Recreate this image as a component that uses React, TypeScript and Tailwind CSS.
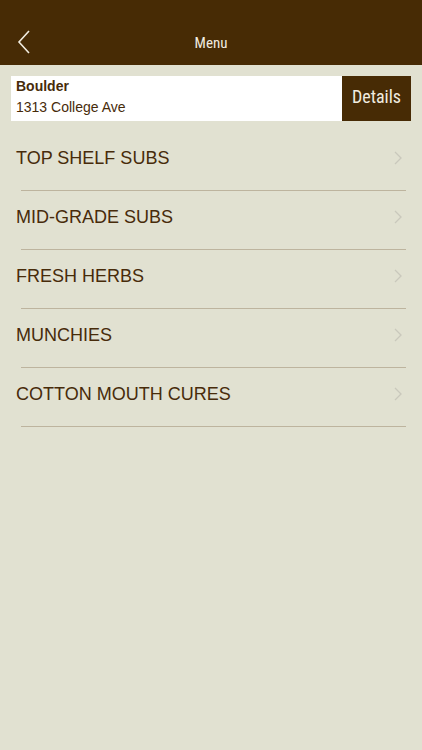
export default function App() {
  const items = [
    "TOP SHELF SUBS",
    "MID-GRADE SUBS",
    "FRESH HERBS",
    "MUNCHIES",
    "COTTON MOUTH CURES",
  ];

  return (
    <div
      className="w-[422px] h-[750px] bg-[#e1e1d1] flex flex-col"
      style={{ fontFamily: '"Liberation Sans", Arial, sans-serif' }}
    >
      {/* Header */}
      <div className="h-[65px] bg-[#472b05] flex items-end pb-[13px] relative shrink-0">
        <svg
          className="absolute left-[17px] top-[30px] w-[14px] h-[24px]"
          viewBox="0 0 14 24"
          fill="none"
          stroke="#f1ece0"
          strokeWidth={1.6}
        >
          <path d="M12 1L2 12l10 11" />
        </svg>
        <div
          className="w-full text-center text-[15px] text-[#f1ece0] leading-[18px]"
          style={{ fontFamily: '"Liberation Sans Narrow", "Roboto Condensed", Roboto, sans-serif' }}
        >
          Menu
        </div>
      </div>

      {/* Location card */}
      <div className="mx-[11px] mt-[11px] h-[45px] flex bg-white">
        <div className="flex-1 flex flex-col justify-start pl-[5px] text-[#472b0a] text-[14px] leading-[21px]">
          <span className="font-bold">Boulder</span>
          <span>1313 College Ave</span>
        </div>
        <div
          className="w-[69px] bg-[#472b05] text-[#f1ece0] text-[18px] flex items-center justify-center pb-[4px]"
          style={{ fontFamily: '"Liberation Sans Narrow", "Roboto Condensed", Roboto, sans-serif' }}
        >
          Details
        </div>
      </div>

      {/* Categories */}
      <div className="mt-[11px] flex flex-col">
        {items.map((label) => (
          <div key={label} className="flex flex-col">
            <div className="h-[58px] pb-[6px] flex items-center justify-between pl-[16px] pr-[20px]">
              <span className="text-[18px] text-[#472b0a]">{label}</span>
              <svg className="w-[8px] h-[14px]" viewBox="0 0 8 14" fill="none" stroke="#c9c8bc" strokeWidth={1.3}>
                <path d="M1 1l6 6-6 6" />
              </svg>
            </div>
            <div className="ml-[21px] mr-[16px] h-px bg-[#bdb49e]" />
          </div>
        ))}
      </div>
    </div>
  );
}
